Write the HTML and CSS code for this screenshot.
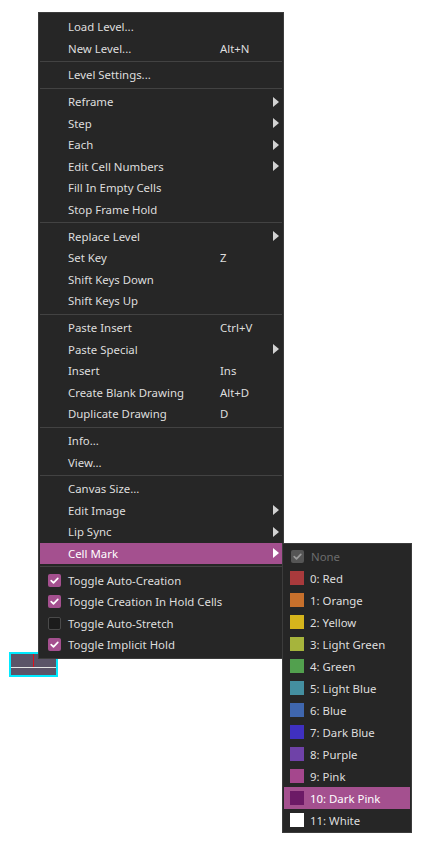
FILE: index.html
```html
<!DOCTYPE html>
<html>
<head>
<meta charset="utf-8">
<link rel="stylesheet" href="styles.css">
</head>
<body>
<div class="stage">
  <div class="cell">
    <div class="cell-top"><span class="cell-marker"></span></div>
    <div class="cell-line"></div>
    <div class="cell-bottom"></div>
  </div>

  <div class="menu main-menu">
    <div class="item"><span class="label">Load Level...</span></div>
    <div class="item"><span class="label">New Level...</span><span class="sc">Alt+N</span></div>
    <div class="sep"></div>
    <div class="item"><span class="label">Level Settings...</span></div>
    <div class="sep"></div>
    <div class="item"><span class="label">Reframe</span><span class="arr"></span></div>
    <div class="item"><span class="label">Step</span><span class="arr"></span></div>
    <div class="item"><span class="label">Each</span><span class="arr"></span></div>
    <div class="item"><span class="label">Edit Cell Numbers</span><span class="arr"></span></div>
    <div class="item"><span class="label">Fill In Empty Cells</span></div>
    <div class="item"><span class="label">Stop Frame Hold</span></div>
    <div class="sep"></div>
    <div class="item"><span class="label">Replace Level</span><span class="arr"></span></div>
    <div class="item"><span class="label">Set Key</span><span class="sc">Z</span></div>
    <div class="item"><span class="label">Shift Keys Down</span></div>
    <div class="item"><span class="label">Shift Keys Up</span></div>
    <div class="sep"></div>
    <div class="item"><span class="label">Paste Insert</span><span class="sc">Ctrl+V</span></div>
    <div class="item"><span class="label">Paste Special</span><span class="arr"></span></div>
    <div class="item"><span class="label">Insert</span><span class="sc">Ins</span></div>
    <div class="item"><span class="label">Create Blank Drawing</span><span class="sc">Alt+D</span></div>
    <div class="item"><span class="label">Duplicate Drawing</span><span class="sc">D</span></div>
    <div class="sep"></div>
    <div class="item"><span class="label">Info...</span></div>
    <div class="item"><span class="label">View...</span></div>
    <div class="sep"></div>
    <div class="item"><span class="label">Canvas Size...</span></div>
    <div class="item"><span class="label">Edit Image</span><span class="arr"></span></div>
    <div class="item"><span class="label">Lip Sync</span><span class="arr"></span></div>
    <div class="item active"><span class="label">Cell Mark</span><span class="arr"></span></div>
    <div class="sep"></div>
    <div class="item"><span class="chk on"><svg viewBox="0 0 13 13"><polyline points="3.2,6.6 5.5,8.8 9.8,4.4"/></svg></span><span class="label">Toggle Auto-Creation</span></div>
    <div class="item"><span class="chk on"><svg viewBox="0 0 13 13"><polyline points="3.2,6.6 5.5,8.8 9.8,4.4"/></svg></span><span class="label">Toggle Creation In Hold Cells</span></div>
    <div class="item"><span class="chk off"></span><span class="label">Toggle Auto-Stretch</span></div>
    <div class="item"><span class="chk on"><svg viewBox="0 0 13 13"><polyline points="3.2,6.6 5.5,8.8 9.8,4.4"/></svg></span><span class="label">Toggle Implicit Hold</span></div>
  </div>

  <div class="menu sub-menu">
    <div class="sitem disabled"><span class="chk dis"><svg viewBox="0 0 13 13"><polyline points="3.2,6.6 5.5,8.8 9.8,4.4"/></svg></span><span class="slabel">None</span></div>
    <div class="sitem"><span class="sw" style="background:#a93a3c"></span><span class="slabel">0: Red</span></div>
    <div class="sitem"><span class="sw" style="background:#c7702c"></span><span class="slabel">1: Orange</span></div>
    <div class="sitem"><span class="sw" style="background:#d6b51c"></span><span class="slabel">2: Yellow</span></div>
    <div class="sitem"><span class="sw" style="background:#a6b43c"></span><span class="slabel">3: Light Green</span></div>
    <div class="sitem"><span class="sw" style="background:#52a04e"></span><span class="slabel">4: Green</span></div>
    <div class="sitem"><span class="sw" style="background:#448fa0"></span><span class="slabel">5: Light Blue</span></div>
    <div class="sitem"><span class="sw" style="background:#3f66ae"></span><span class="slabel">6: Blue</span></div>
    <div class="sitem"><span class="sw" style="background:#3f30c0"></span><span class="slabel">7: Dark Blue</span></div>
    <div class="sitem"><span class="sw" style="background:#6f42a8"></span><span class="slabel">8: Purple</span></div>
    <div class="sitem"><span class="sw" style="background:#a5478d"></span><span class="slabel">9: Pink</span></div>
    <div class="sitem active"><span class="sw" style="background:#6c1a66"></span><span class="slabel">10: Dark Pink</span></div>
    <div class="sitem"><span class="sw" style="background:#ffffff"></span><span class="slabel">11: White</span></div>
  </div>
</div>
</body>
</html>
```

FILE: styles.css
```css
html, body {
  margin: 0;
  padding: 0;
  background: #ffffff;
}

.stage {
  position: relative;
  width: 422px;
  height: 844px;
  font-family: "Noto Sans", "Open Sans", sans-serif;
  font-size: 11.4px;
  color: #dedede;
}

/* timeline cell peeking under the menu */
.cell {
  position: absolute;
  left: 9px;
  top: 652px;
  width: 45px;
  height: 21px;
  border: 2px solid #00eaff;
  background: #5b5468;
  display: flex;
  flex-direction: column;
}
.cell-top {
  height: 13px;
  position: relative;
}
.cell-marker {
  position: absolute;
  left: 22px;
  top: 0;
  width: 1px;
  height: 13px;
  background: #e0101a;
}
.cell-line {
  height: 1px;
  background: #e4e4e4;
}
.cell-bottom {
  flex: 1;
}

.menu {
  position: absolute;
  background: #262626;
  border: 1px solid #3c3c3c;
  box-sizing: border-box;
  display: flex;
  flex-direction: column;
}

.main-menu {
  left: 38px;
  top: 12px;
  width: 246px;
  padding: 3px 1px 2px 1px;
}

.item {
  height: 21.6px;
  display: grid;
  grid-template-columns: 28px 152px 1fr 14px;
  align-items: center;
  white-space: nowrap;
}
.item .chk { grid-column: 1; justify-self: start; margin-left: 8px; }
.item .label { grid-column: 2; }
.item .sc { grid-column: 3; }
.item .arr { grid-column: 4; justify-self: start; margin-left: 5px; }

.item.active, .sitem.active {
  background: #a4508f;
  color: #ffffff;
}

.arr {
  width: 0;
  height: 0;
  border-left: 6px solid #d2d2d2;
  border-top: 5px solid transparent;
  border-bottom: 5px solid transparent;
}
.item.active .arr {
  border-left-color: #ffffff;
}

.sep {
  height: 5px;
  display: flex;
  flex-direction: column;
  justify-content: flex-start;
}
.sep::before {
  content: "";
  display: block;
  margin-top: 2px;
  height: 1px;
  background: #424242;
}

.chk {
  width: 13px;
  height: 13px;
  border-radius: 2px;
  box-sizing: border-box;
  display: flex;
  align-items: center;
  justify-content: center;
}
.chk svg {
  width: 13px;
  height: 13px;
}
.chk polyline {
  fill: none;
  stroke: #ffffff;
  stroke-width: 1.7;
  stroke-linecap: round;
  stroke-linejoin: round;
}
.chk.on {
  background: #a4508f;
}
.chk.off {
  background: #1c1c1c;
  border: 1px solid #4a4a4a;
}
.chk.dis {
  background: #555555;
}
.chk.dis polyline {
  stroke: #9a9a9a;
}

.sub-menu {
  left: 282px;
  top: 543px;
  width: 130px;
  padding: 1px;
}

.sitem {
  height: 22px;
  display: flex;
  align-items: center;
  white-space: nowrap;
}
.sitem .sw,
.sitem .chk {
  margin-left: 6px;
  width: 14px;
  height: 14px;
  flex: none;
}
.sitem .chk {
  width: 13px;
  height: 13px;
  margin-left: 7px;
  margin-right: 1px;
}
.slabel {
  margin-left: 6px;
}
.sitem.disabled {
  color: #6c6c6c;
}
```
